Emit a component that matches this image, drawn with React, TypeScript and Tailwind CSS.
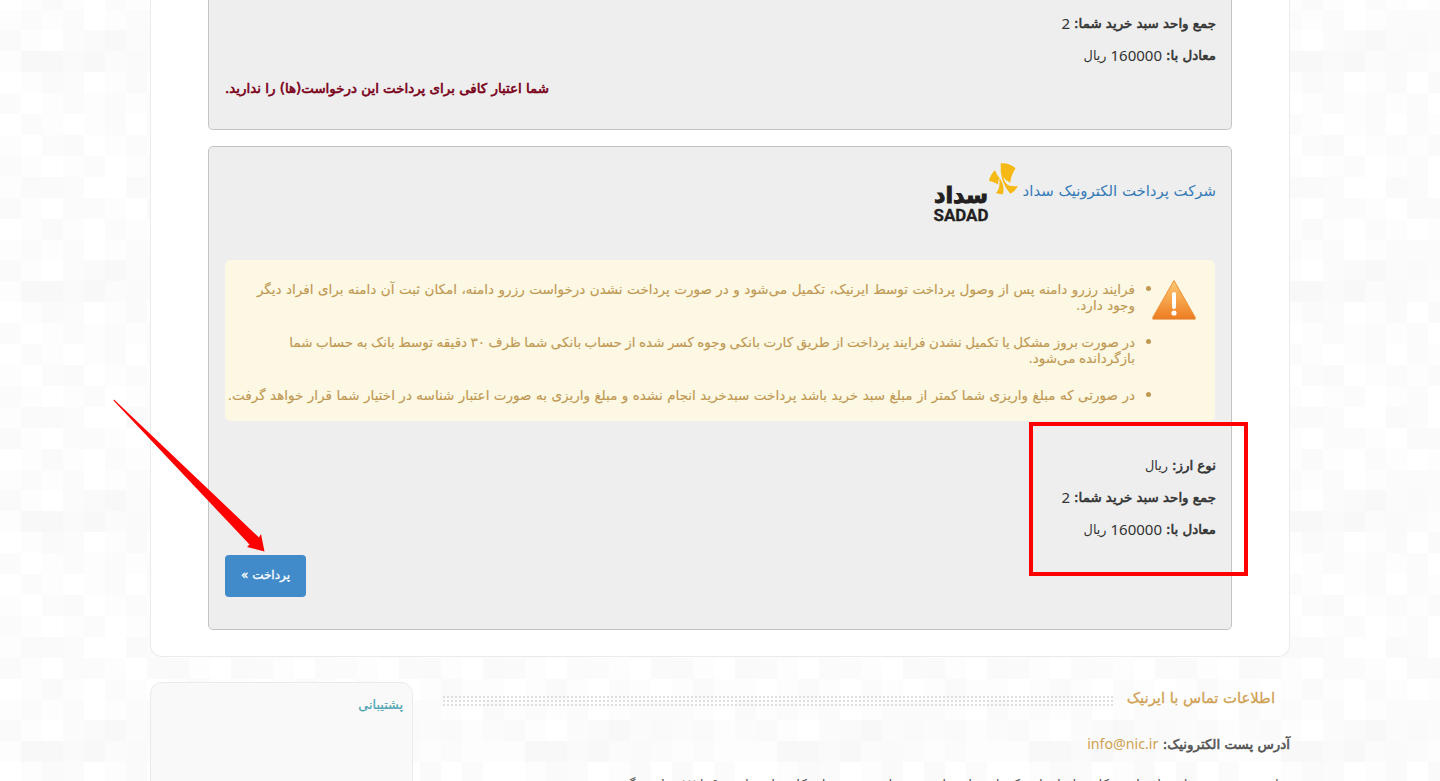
import React from "react";

const SHADES = ["#ffffff", "#fdfdfd", "#fbfbfb", "#fafafa", "#f8f8f8"];

const TILE = [
  "310234232312",
  "144342321211",
  "013201303020",
  "201212120213",
  "021012021302",
  "102301213021",
  "210120120312",
  "133200320123",
  "310221033103",
  "013102101311",
  "121201222103",
];

function Mosaic() {
  return (
    <svg className="absolute inset-0 -z-10" width="1440" height="781" aria-hidden="true">
      <defs>
        <pattern id="mosaic" width="252" height="230" y="30" patternUnits="userSpaceOnUse">
          {TILE.map((row, r) =>
            row.split("").map((c, i) => (
              <rect key={`${r}-${i}`} x={i * 21} y={r * 21} width="21" height="21" fill={SHADES[Number(c)]} />
            )),
          )}
        </pattern>
      </defs>
      <rect width="1440" height="781" fill="url(#mosaic)" />
    </svg>
  );
}

function SadadLogo() {
  return (
    <svg width="86" height="60" viewBox="933 162 86 60" className="shrink-0">
      <g fill="#f6b813">
        <path d="M1000.700 163.300Q1008.500 162.300 1015.600 168.200 1010.800 175.500 1010.200 182.700 1005.500 180.700 1003.300 177Q1004.700 184.500 1010 185.800 1013.500 186.600 1017.900 186 1015.300 191.300 1010.300 193.800 1005.500 188.500 1002.500 180.500Q1000.100 171.800 1000.700 163.300z" />
        <path d="M995 170.300Q990.300 174.800 989 180.700 993.800 181.700 998.200 184.400 998 180.500 999.200 178Q1000.800 188.500 996 193 999.200 194.500 1003.100 194 1004.600 186 1000.800 180Q997 175.800 995 170.300z" />
      </g>
      <text x="934" y="203" direction="ltr" textLength="54" lengthAdjust="spacingAndGlyphs" fontFamily="DejaVu Sans" fontWeight="700" fontSize="23" fill="#231f20" stroke="#231f20" strokeWidth="1">سداد</text>
      <text x="933.500" y="221" direction="ltr" textLength="55" lengthAdjust="spacingAndGlyphs" fontFamily="Roboto" fontWeight="700" fontSize="16.500" fill="#231f20" stroke="#231f20" strokeWidth=".3">SADAD</text>
    </svg>
  );
}

function WarningIcon() {
  return (
    <svg width="46" height="42" viewBox="0 0 46 42" className="shrink-0">
      <defs>
        <linearGradient id="amber" x1="0" x2="0" y1="0" y2="1">
          <stop offset="0" stopColor="#fdc875" />
          <stop offset=".5" stopColor="#f6a54c" />
          <stop offset="1" stopColor="#ee7d22" />
        </linearGradient>
      </defs>
      <path d="M23 2.500 44.300 39.500q.3 1-1 1H2.700q-1.300 0-1-1z" fill="url(#amber)" stroke="#ee9136" strokeWidth="1" strokeLinejoin="round" />
      <path d="M1.500 40.500h43v1h-43z" fill="#df6c14" />
      <rect x="21" y="14" width="4" height="17" rx="2" fill="#fff" />
      <circle cx="23" cy="35" r="2.600" fill="#fff" />
    </svg>
  );
}

function Strong({ children }: { children: string }) {
  return <span className="text-[13.4px] [-webkit-text-stroke:0.6px_currentColor]">{children}</span>;
}

function Field({ label, amount, unit }: { label: string; amount?: string; unit?: string }) {
  return (
    <p className="flex h-8 items-center gap-1 whitespace-nowrap pb-3 leading-[20px]">
      <Strong>{label}</Strong>
      {amount && <span className="pb-[3px] font-[Noto_Sans,sans-serif] text-[15px]">{amount}</span>}
      {unit && <span className="text-[12.8px]">{unit}</span>}
    </p>
  );
}

const NOTICES = [
  {
    spacing: "[word-spacing:0.2px]",
    lines: ["فرایند رزرو دامنه پس از وصول پرداخت توسط ایرنیک، تکمیل می‌شود و در صورت پرداخت نشدن درخواست رزرو دامنه، امکان ثبت آن دامنه برای افراد دیگر", "وجود دارد."],
  },
  {
    spacing: "[word-spacing:-0.85px]",
    lines: ["در صورت بروز مشکل یا تکمیل نشدن فرایند پرداخت از طریق کارت بانکی وجوه کسر شده از حساب بانکی شما ظرف ۳۰ دقیقه توسط بانک به حساب شما", "بازگردانده می‌شود."],
  },
  {
    spacing: "[word-spacing:0.15px]",
    lines: ["در صورتی که مبلغ واریزی شما کمتر از مبلغ سبد خرید باشد پرداخت سبدخرید انجام نشده و مبلغ واریزی به صورت اعتبار شناسه در اختیار شما قرار خواهد گرفت."],
  },
];

export default function App() {
  return (
    <div dir="rtl" className="relative isolate h-[781px] w-[1440px] overflow-hidden font-[DejaVu_Sans,sans-serif] text-[14px] text-[#333]">
      <Mosaic />
      <main className="mx-auto h-[657px] w-[1140px] rounded-b-[12px] border border-t-0 border-[#ebebeb] bg-white px-[57px]">
        <section className="h-[130px] rounded-b-[5px] border border-t-0 border-[#c4c4c4] bg-[#eee] pt-[14px] pr-[15px] pl-[16px]">
          <Field label="جمع واحد سبد خرید شما:" amount="2" />
          <Field label="معادل با:" amount="160000" unit="ریال" />
          <p className="text-left leading-[20px] whitespace-nowrap text-[#7a0019]">
            <Strong>شما اعتبار کافی برای پرداخت این درخواست(ها) را ندارید.</Strong>
          </p>
        </section>
        <section className="mt-4 h-[484px] rounded-[5px] border border-[#c4c4c4] bg-[#eee] pt-[15px] pr-[15px] pl-[16px]">
          <div className="flex h-[98px] gap-1">
            <span className="pt-[19px] text-[14.9px] leading-[20px] whitespace-nowrap text-[#337ab7]">شرکت پرداخت الکترونیک سداد</span>
            <SadadLogo />
          </div>
          <div className="mr-px flex h-[161px] rounded-[5px] bg-[#fdf8e3] pt-[18px] pr-[18px] text-[#c09853]">
            <WarningIcon />
            <ul className="pt-[3px]">
              {NOTICES.map(({ spacing, lines }) => (
                <li key={lines[0]} className="mb-[21px] flex gap-[11px]">
                  <span className="mt-[5px] size-[5px] shrink-0 rounded-full bg-[#c09853]" />
                  <span className={`text-[13.5px] leading-[16px] whitespace-nowrap [-webkit-text-stroke:0.15px_currentColor] ${spacing}`}>
                    {lines.map((line) => (
                      <span key={line} className="block">{line}</span>
                    ))}
                  </span>
                </li>
              ))}
            </ul>
          </div>
          <div className="h-[134px] pt-[35px]">
            <Field label="نوع ارز:" unit="ریال" />
            <Field label="جمع واحد سبد خرید شما:" amount="2" />
            <Field label="معادل با:" amount="160000" unit="ریال" />
          </div>
          <div className="flex justify-end">
            <button className="h-[42px] w-[81px] rounded-[4px] bg-[#428bca] pb-[3px] text-[12px] whitespace-nowrap text-white [-webkit-text-stroke:0.3px_currentColor]">پرداخت »</button>
          </div>
        </section>
      </main>
      <div className="mx-auto mt-[25px] flex w-[1140px] justify-between">
        <section className="w-[848px]">
          <div className="flex h-[52px] items-start pr-[15px]">
            <h2 className="w-[161px] pt-[5px] text-[14.8px] leading-[22px] whitespace-nowrap text-[#d0a153] [-webkit-text-stroke:0.3px_currentColor]">اطلاعات تماس با ایرنیک</h2>
            <svg className="mt-[14px]" width="671" height="10" viewBox="0 0 671 10">
              <path d="M0 1h671M0 5h671M0 9h671" stroke="#dfdfdf" strokeWidth="2" strokeDasharray="2 2" />
            </svg>
          </div>
          <p className="h-[40px] leading-[20px] whitespace-nowrap text-[#555]">
            <Strong>آدرس پست الکترونیک:</Strong> <span className="font-[Noto_Sans,sans-serif] text-[14.2px] text-[#d0a153]">info@nic.ir</span>
          </p>
          <p className="text-[13.5px] leading-[20px] whitespace-nowrap text-[#555]">برای رزرو و ثبت دامنه از طریق کارشناسان ایرنیک با شماره تلفن پشتیبانی در روزهای کاری از ساعت ۹ تا ۱۷ تماس بگیرید</p>
        </section>
        <aside className="h-[110px] w-[263px] rounded-t-[12px] border border-[#ebebeb] bg-[#f9f9f9] px-[9px] pt-[12px] text-[12.8px] leading-[20px] text-[#4ba3b4] [-webkit-text-stroke:0.2px_currentColor]">پشتیبانی</aside>
      </div>
      <div className="absolute top-[422px] left-[1029px] h-[154px] w-[219px] border-4 border-[#f00]" />
      <svg className="absolute top-[398px] left-[112px]" width="156" height="156" viewBox="112 398 156 156">
        <path d="M114 399.500 259 537.500 261 534 264.500 551.500 247 547 249.500 544.500 113.500 400.500z" fill="#f00" />
      </svg>
    </div>
  );
}
